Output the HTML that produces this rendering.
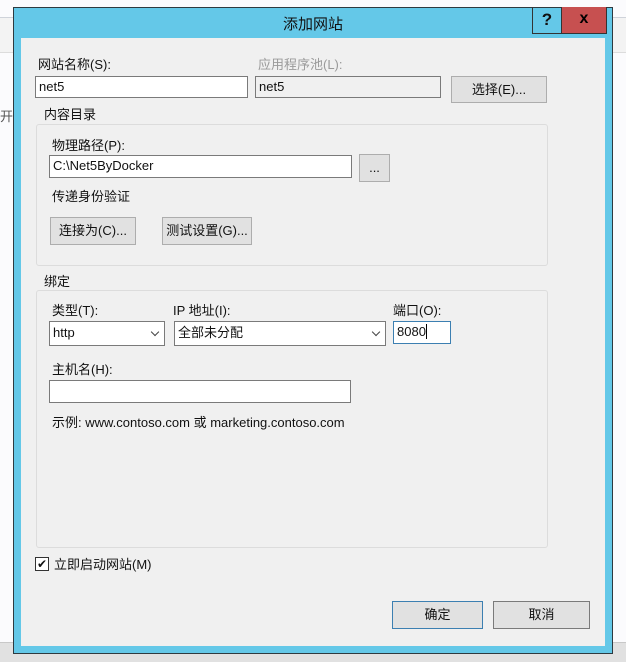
<!DOCTYPE html>
<html><head><meta charset="utf-8"><style>
*{box-sizing:border-box;margin:0;padding:0}
body{width:626px;height:662px;position:relative;overflow:hidden;background:#fbfbfd;font-family:"Liberation Sans","Noto Sans CJK SC",sans-serif;font-size:13px;color:#111}
.a{position:absolute;white-space:nowrap}
.inp{position:absolute;background:#fff;border:1px solid #7a7a7a;padding:1px 3px;line-height:18px;white-space:nowrap}
.btn{position:absolute;background:#e1e1e1;border:1px solid #adadad;text-align:center;white-space:nowrap}
.grp{position:absolute;border:1px solid #dcdcdc;border-radius:3px}
.lg{position:absolute;background:#f0f0f0;padding:0 2px;line-height:14px}
.sel{position:absolute;background:#fff;border:1px solid #7a7a7a;padding:2px 3px;line-height:18px}
.sel:after{content:"";position:absolute;right:6px;top:7px;width:5px;height:5px;border-right:1.3px solid #444;border-bottom:1.3px solid #444;transform:rotate(45deg)}
</style></head><body>
<div class="a" style="left:0;top:17px;width:626px;height:1px;background:#cfd3da"></div>
<div class="a" style="left:0;top:18px;width:626px;height:34px;background:#f3f3f3"></div>
<div class="a" style="left:0;top:52px;width:626px;height:1px;background:#dcdcdc"></div>
<div class="a" style="left:0;top:106px;color:#555">开</div>
<div class="a" style="left:0;top:643px;width:626px;height:19px;background:#e1e1e1"></div>
<div class="a" style="left:0;top:642px;width:626px;height:1px;background:#c8c8c8"></div>
<div class="a" style="left:13px;top:7px;width:600px;height:647px;background:#64c8e8;border:1px solid #2e3a40"></div>
<div class="a" style="left:13px;top:13px;width:600px;text-align:center;font-size:15px">添加网站</div>
<div class="a" style="left:532px;top:7px;width:30px;height:27px;border:1px solid #333;border-top:none;text-align:center;font-weight:bold;font-size:17px;line-height:25px">?</div>
<div class="a" style="left:561px;top:7px;width:46px;height:27px;background:#c75050;border:1px solid #333;border-top:none;text-align:center;font-weight:bold;font-size:16px;line-height:24px;color:#000">x</div>
<div class="a" style="left:21px;top:38px;width:584px;height:608px;background:#f0f0f0"></div>

<div class="a" style="left:38px;top:54px">网站名称(S):</div>
<div class="a" style="left:258px;top:54px;color:#9a9a9a">应用程序池(L):</div>
<div class="inp" style="left:35px;top:76px;width:213px;height:22px">net5</div>
<div class="inp" style="left:255px;top:76px;width:186px;height:22px;background:#f0f0f0">net5</div>
<div class="btn" style="left:451px;top:76px;width:96px;height:27px;line-height:25px">选择(E)...</div>

<div class="grp" style="left:36px;top:124px;width:512px;height:142px"></div>
<div class="lg" style="left:42px;top:108px">内容目录</div>
<div class="a" style="left:52px;top:135px">物理路径(P):</div>
<div class="inp" style="left:49px;top:155px;width:303px;height:23px">C:\Net5ByDocker</div>
<div class="btn" style="left:359px;top:154px;width:31px;height:28px;line-height:26px">...</div>
<div class="a" style="left:52px;top:186px">传递身份验证</div>
<div class="btn" style="left:50px;top:217px;width:86px;height:28px;line-height:26px">连接为(C)...</div>
<div class="btn" style="left:162px;top:217px;width:90px;height:28px;line-height:26px">测试设置(G)...</div>

<div class="grp" style="left:36px;top:290px;width:512px;height:258px"></div>
<div class="lg" style="left:42px;top:275px">绑定</div>
<div class="a" style="left:52px;top:300px">类型(T):</div>
<div class="a" style="left:173px;top:300px">IP 地址(I):</div>
<div class="a" style="left:393px;top:300px">端口(O):</div>
<div class="sel" style="left:49px;top:321px;width:116px;height:25px">http</div>
<div class="sel" style="left:174px;top:321px;width:212px;height:25px">全部未分配</div>
<div class="inp" style="left:393px;top:321px;width:58px;height:23px;border-color:#3c7fb1">8080<span style="display:inline-block;width:1px;height:15px;background:#000;vertical-align:-3px"></span></div>
<div class="a" style="left:52px;top:359px">主机名(H):</div>
<div class="inp" style="left:49px;top:380px;width:302px;height:23px"></div>
<div class="a" style="left:52px;top:412px">示例: www.contoso.com 或 marketing.contoso.com</div>

<div class="a" style="left:35px;top:557px;width:14px;height:14px;background:#fff;border:1px solid #333;font-size:12px;line-height:12px;text-align:center">✔</div>
<div class="a" style="left:54px;top:554px">立即启动网站(M)</div>

<div class="btn" style="left:392px;top:601px;width:91px;height:28px;line-height:26px;border-color:#3c7fb1">确定</div>
<div class="btn" style="left:493px;top:601px;width:97px;height:28px;line-height:26px;border-color:#7a7a7a">取消</div>
</body></html>
